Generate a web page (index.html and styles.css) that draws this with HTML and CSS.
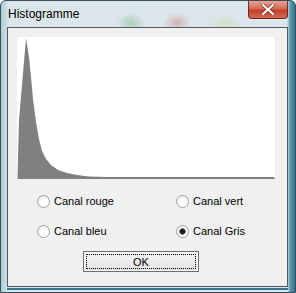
FILE: index.html
```html
<!DOCTYPE html>
<html lang="fr">
<head>
    <meta charset="UTF-8">
    <title>Histogramme</title>
    <link rel="stylesheet" href="styles.css">
</head>
<body>
    <div class="window">
        <div class="titlebar">
            <span class="title">Histogramme</span>
            <div class="close">
                <svg width="14" height="11" viewBox="0 0 14 11">
                    <path d="M2 1 L12 10 M12 1 L2 10" stroke="#7a2a20" stroke-width="3.6" stroke-linecap="square"/>
                    <path d="M2 1 L12 10 M12 1 L2 10" stroke="#fff" stroke-width="2.2" stroke-linecap="square"/>
                </svg>
            </div>
        </div>

        <div class="client">
            <div class="graph">
                <svg width="258" height="142" viewBox="0 0 258 142">
                    <polygon fill="#808080" points="0.5,142 1,121 2,83 9,1 12,20 14,40 16,62 19,85 22,102 25,114 29,122 34,128 41,133 50,136 60,138 72,139.5 90,140 257,140 258,142"/>
                </svg>
            </div>

            <div class="options">
                <label class="option"><input type="radio" name="canal"> Canal rouge</label>
                <label class="option"><input type="radio" name="canal"> Canal vert</label>
                <label class="option"><input type="radio" name="canal"> Canal bleu</label>
                <label class="option"><input type="radio" name="canal" checked> Canal Gris</label>
            </div>

            <button class="ok" type="button"><span>OK</span></button>
        </div>
    </div>
</body>
</html>
```

FILE: styles.css
```css
body { margin: 0; background: #fff; font-family: "Liberation Sans", Arial, sans-serif; }

.window {
    width: 296px; height: 293px; box-sizing: border-box;
    border: 1px solid #3c4d57; border-radius: 6px 6px 0 0;
    display: flex; flex-direction: column;
    background:
        radial-gradient(ellipse 14px 10px at 130px 22px, rgba(90,160,90,0.35), transparent),
        radial-gradient(ellipse 14px 10px at 176px 22px, rgba(190,80,80,0.35), transparent),
        radial-gradient(ellipse 16px 10px at 224px 24px, rgba(200,200,120,0.35), transparent),
        linear-gradient(to right, #a9ccd6 0, #dbe6ea 8px, #dbe6ea 286px, #5f9cb0 289px, #2c6a85 295px),
        #dbe6ea;
}

.titlebar { height: 26px; display: flex; align-items: flex-start; }
.title { font-size: 12px; color: #000; padding: 6px 0 0 7px; }

.close {
    margin-left: auto; margin-right: 7px;
    width: 40px; height: 18px; box-sizing: border-box;
    border: 1px solid #6b2a22; border-top: none; border-radius: 0 0 4px 4px;
    background: linear-gradient(#e8a393, #d46a55 45%, #c0422c 55%, #d46b4f);
    display: flex; align-items: center; justify-content: center;
}

.client {
    flex: 1; margin: 0 7px 5px 6px;
    border: 1px solid #4a5a64; background: #f0f0f0;
    display: flex; flex-direction: column;
    box-shadow: 0 1px 0 #d4e6ee, 0 3px 0 #3a7890;
}

.graph { margin: 9px 0 0 9px; width: 258px; height: 142px; background: #fff; }
.graph svg { display: block; }

.options {
    display: grid; grid-template-columns: 139px 100px;
    row-gap: 14px; margin: 14px 0 0 29px;
}

.option { display: flex; align-items: center; gap: 4px; font-size: 11px; color: #000; height: 16px; }

.option input {
    appearance: none; margin: 0; width: 13px; height: 13px;
    border: 1px solid #9aa3a8; border-radius: 50%; box-sizing: border-box;
    background: radial-gradient(circle at 60% 65%, #fff 35%, #e6e8ea 85%);
}
.option input:checked {
    background: radial-gradient(circle at 50% 50%, #111 0, #222 2px, #6a6a6a 3px, transparent 3.5px),
                radial-gradient(circle at 60% 65%, #fff 35%, #e6e8ea 85%);
}

.ok {
    margin: 12px 0 0 75px; width: 116px; height: 21px; padding: 2px;
    border: 1px solid #6e6e6e; background: linear-gradient(#f4f4f4, #e4e4e4);
    font-family: "Liberation Sans", Arial, sans-serif; font-size: 11px; color: #000;
    box-shadow: inset 0 0 0 1px #fafafa;
}
.ok span {
    display: flex; align-items: center; justify-content: center;
    height: 100%; box-sizing: border-box; border: 1px dotted #000;
}
```
